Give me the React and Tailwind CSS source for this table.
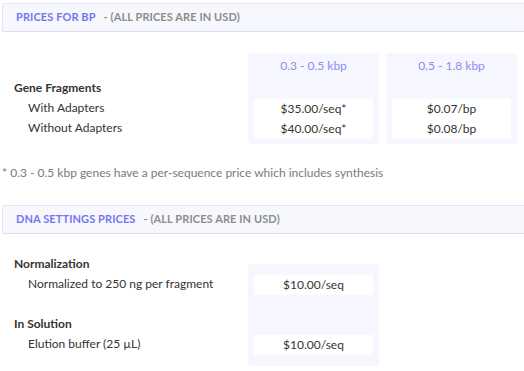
const SectionHeader = ({ title }) => (
  <div className="ml-[2px] w-[560px] h-[29px] flex items-center pl-[13px] bg-[#f7f7fe] border border-[#e4e4f6] border-b-[#dcdcf7] rounded-[2px] text-[11px] font-bold uppercase tracking-[0.1px]">
    <span className="text-[#7476ee]">{title}</span>
    <span className="ml-[8px] text-[#8c8c8c]">- (All prices are in USD)</span>
  </div>
);

const PriceColumn = ({ range, prices }) => (
  <div className="w-[131px] bg-[#f6f6fe] rounded-[3px] px-[6px] pb-[5px]">
    <div className="h-[25px] flex items-center justify-center text-[#8b8df2] text-[12px]">{range}</div>
    <div className="h-[21px]" />
    <div className="bg-white">
      {prices.map((p) => (
        <div key={p} className="h-[20px] flex items-center justify-center text-[#333] text-[12px]">
          {p}
        </div>
      ))}
    </div>
  </div>
);

export default function App() {
  return (
    <div className="w-[524px] h-[371px] overflow-hidden bg-white pt-[3px] text-[12px] text-[#333]" style={{ fontFamily: 'Lato, "Open Sans", sans-serif' }}>
      <SectionHeader title="Prices for BP" />

      {/* gene fragment prices */}
      <div className="flex items-start mt-[21px]">
        <div className="w-[248px] pt-[25px] pl-[14px]">
          <div className="h-[20px] flex items-center font-bold">Gene Fragments</div>
          <div className="h-[20px] flex items-center pl-[14px]">With Adapters</div>
          <div className="h-[20px] flex items-center pl-[14px]">Without Adapters</div>
        </div>
        <PriceColumn range="0.3 - 0.5 kbp" prices={['$35.00/seq*', '$40.00/seq*']} />
        <div className="w-[7px]" />
        <PriceColumn range="0.5 - 1.8 kbp" prices={['$0.07/bp', '$0.08/bp']} />
      </div>

      <p className="mt-[21px] pl-[2px] h-[16px] leading-[16px] text-[#7a7a7a]">
        * 0.3 - 0.5 kbp genes have a per-sequence price which includes synthesis
      </p>

      <div className="mt-[24px]">
        <SectionHeader title="DNA Settings Prices" />
      </div>

      {/* dna settings */}
      <div className="flex items-start">
        <div className="w-[248px] pt-[20px] pl-[14px]">
          <div className="h-[20px] flex items-center font-bold">Normalization</div>
          <div className="h-[20px] flex items-center pl-[14px]">Normalized to 250 ng per fragment</div>
          <div className="h-[20px]" />
          <div className="h-[20px] flex items-center font-bold">In Solution</div>
          <div className="h-[20px] flex items-center pl-[14px]">Elution buffer (25 µL)</div>
        </div>
        <div className="mt-[30px] w-[131px] bg-[#f6f6fe] rounded-[3px] px-[6px] pt-[11px] pb-[11px]">
          <div className="h-[20px] bg-white flex items-center justify-center">$10.00/seq</div>
          <div className="h-[40px]" />
          <div className="h-[20px] bg-white flex items-center justify-center">$10.00/seq</div>
        </div>
      </div>
    </div>
  );
}
